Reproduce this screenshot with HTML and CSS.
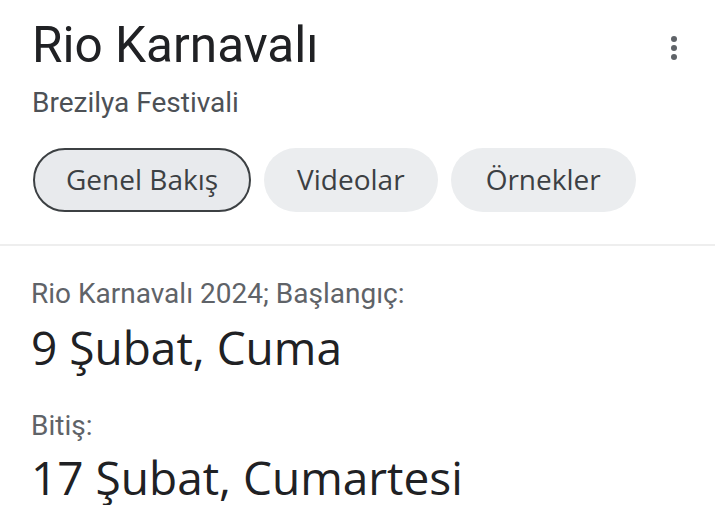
FILE: index.html
```html
<!DOCTYPE html>
<html lang="tr">
<head>
<meta charset="utf-8">
<title>Rio Karnavalı</title>
<link rel="stylesheet" href="styles.css">
</head>
<body>
<div class="card">
  <div class="header">
    <div class="heading">
      <h1 class="title">Rio Karnavalı</h1>
      <div class="subtitle">Brezilya Festivali</div>
    </div>
    <svg class="menu" viewBox="0 0 24 24" width="36" height="36" aria-hidden="true">
      <circle cx="12" cy="6" r="2"/>
      <circle cx="12" cy="12" r="2"/>
      <circle cx="12" cy="18" r="2"/>
    </svg>
  </div>
  <div class="chips">
    <div class="chip chip-active">Genel Bakış</div>
    <div class="chip">Videolar</div>
    <div class="chip chip-wide">Örnekler</div>
  </div>
  <div class="divider"></div>
  <div class="info">
    <div class="label">Rio Karnavalı 2024; Başlangıç:</div>
    <div class="date">9 Şubat, Cuma</div>
    <div class="label label-end">Bitiş:</div>
    <div class="date">17 Şubat, Cumartesi</div>
  </div>
</div>
</body>
</html>
```
FILE: styles.css
```css
html, body {
  margin: 0;
  padding: 0;
  background: #ffffff;
}

.card {
  width: 715px;
  font-family: Roboto, "Liberation Sans", sans-serif;
}

.header {
  display: flex;
  justify-content: space-between;
  align-items: flex-start;
  padding: 16px 23px 0 32px;
}

.title {
  margin: 0;
  font-size: 49.5px;
  font-weight: 400;
  line-height: 58px;
  color: #202124;
}

.subtitle {
  margin-top: 11px;
  font-size: 28px;
  line-height: 36px;
  color: #4d5156;
}

.menu {
  margin-top: 14px;
  fill: #5f6368;
}

.chips {
  display: flex;
  gap: 13px;
  padding: 27px 0 0 33px;
}

.chip {
  box-sizing: border-box;
  height: 64px;
  display: flex;
  align-items: center;
  padding: 0 31px 3px;
  border: 2px solid transparent;
  border-radius: 32px;
  background: #ebedef;
  font-family: "Open Sans", "Noto Sans", sans-serif;
  font-size: 28px;
  font-weight: 500;
  color: #3c4043;
}

.chip-wide {
  padding: 0 33px 3px;
}

.chip-active {
  background: #e8eaed;
  border-color: #3c4043;
}

.divider {
  margin-top: 32px;
  height: 2px;
  background: #eeeeee;
}

.info {
  padding: 30px 0 0 31px;
}

.label {
  font-size: 28px;
  line-height: 36px;
  color: #5f6368;
}

.label-end {
  margin-top: 33px;
}

.date {
  margin-top: 7px;
  font-family: "Open Sans", "Noto Sans", sans-serif;
  font-size: 46px;
  line-height: 56px;
  color: #202124;
}

.label-end + .date {
  margin-top: 5px;
}
```
